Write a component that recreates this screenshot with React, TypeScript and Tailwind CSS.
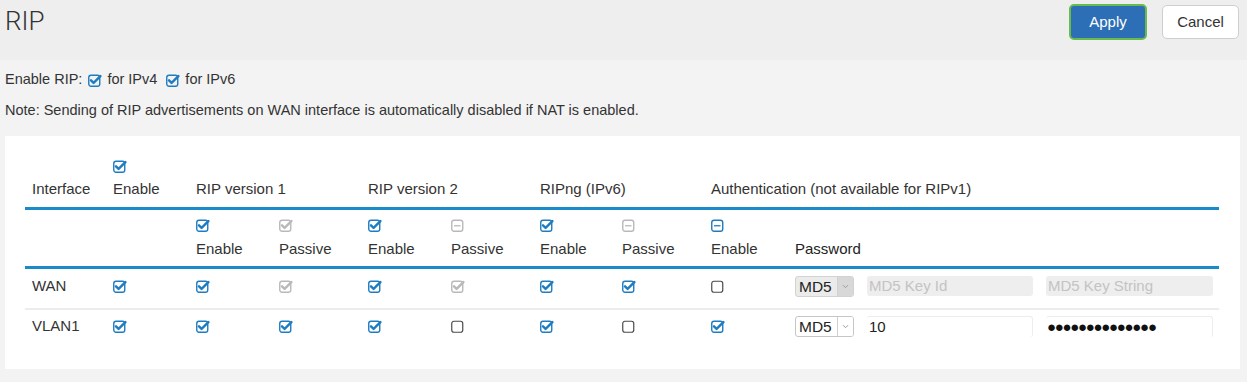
import React from "react";

type Mark = "on" | "onOff" | "off" | "minus" | "minusOff";

const cols =
  "grid grid-cols-[81px_83px_83px_89px_83px_89px_82px_89px_84px_72px_179px_1fr] pl-[7px]";

function Check({ mark }: { mark: Mark }) {
  const color =
    mark === "on" || mark === "minus" ? "#1f7cc0" : mark === "off" ? "#4a4a4a" : "#b9b9b9";

  return (
    <svg width="14" height="13" viewBox="0 0 14 13" className="block">
      <rect
        x="0.75"
        y="1.25"
        width="11"
        height="11"
        rx="2.2"
        fill="none"
        stroke={color}
        strokeWidth={mark === "off" ? 1.2 : 1.4}
      />
      {(mark === "on" || mark === "onOff") && (
        <path
          d="M3 6.3 L5.6 8.9 L12.4 2.1"
          fill="none"
          stroke={color}
          strokeWidth="2.4"
          strokeLinecap="round"
          strokeLinejoin="round"
        />
      )}
      {(mark === "minus" || mark === "minusOff") && (
        <path d="M3 6.75 H9.5" stroke={color} strokeWidth="1.3" />
      )}
    </svg>
  );
}

function Md5Select({ disabled }: { disabled?: boolean }) {
  return (
    <div
      className={`flex h-[21px] w-[59px] overflow-hidden rounded-[3px] border ${
        disabled ? "border-[#d2d2d2] bg-[#ebebeb]" : "border-[#c6c6c6] bg-white"
      }`}
    >
      <span className="flex-1 pl-[3px] text-[15.5px] leading-[19px] text-[#222]">MD5</span>
      <span
        className={`flex w-[16px] items-center justify-center border-l ${
          disabled ? "border-[#d2d2d2] bg-[#d8d8d8]" : "border-[#d0d0d0] bg-white"
        }`}
      >
        <svg width="7" height="5" viewBox="0 0 7 5">
          <path d="M1 1.2 L3.5 3.7 L6 1.2" fill="none" stroke="#9a9a9a" strokeWidth="1" />
        </svg>
      </span>
    </div>
  );
}

function Field({ width, text, placeholder }: { width: string; text?: string; placeholder?: string }) {
  if (placeholder) {
    return (
      <div className={`${width} h-[20px] rounded-[3px] bg-[#eeeeee] pl-[2px] leading-[20px] text-[#c3c3c3]`}>
        {placeholder}
      </div>
    );
  }
  return (
    <div
      className={`${width} h-[21px] rounded-[3px] border-t border-r border-[#ededed] bg-white pl-[2px] leading-[20px] text-[#222]`}
    >
      {text}
    </div>
  );
}

const rows: { name: string; marks: Mark[]; disabled: boolean }[] = [
  { name: "WAN", marks: ["on", "on", "onOff", "on", "onOff", "on", "on", "off"], disabled: true },
  { name: "VLAN1", marks: ["on", "on", "on", "on", "off", "on", "off", "on"], disabled: false },
];

export default function App() {
  return (
    <div className="h-[382px] w-[1247px] overflow-hidden bg-[#f3f3f3] font-['Liberation_Sans',Arial,sans-serif] text-[14.5px] text-[#333]">
      {/* Title bar */}
      <div className="flex h-[60px] items-start justify-between bg-[#eeeeee] pl-[5px] pr-[8px]">
        <h1 className="pt-[6px] font-['Roboto',sans-serif] text-[26px] font-light leading-[30px] text-[#333]">
          RIP
        </h1>
        <div className="flex items-center gap-[15px] pt-[4px]">
          <button className="h-[36px] w-[78px] rounded-[5px] border-2 border-[#68bb4c] bg-[#2d6fb6] text-[15px] text-white">
            Apply
          </button>
          <button className="h-[34px] w-[77px] rounded-[5px] border border-[#cfcfcf] bg-white text-[15px] text-[#333]">
            Cancel
          </button>
        </div>
      </div>

      <div className="px-[5px]">
        <div className="mt-[10px] flex h-[20px] items-center">
          <span>Enable RIP:</span>
          <span className="ml-[6px]">
            <Check mark="on" />
          </span>
          <span className="ml-[5px]">for IPv4</span>
          <span className="ml-[9px]">
            <Check mark="on" />
          </span>
          <span className="ml-[5px]">for IPv6</span>
        </div>
        <p className="mt-[10px] leading-[20px]">
          Note: Sending of RIP advertisements on WAN interface is automatically disabled if NAT is enabled.
        </p>

        {/* Table panel */}
        <div className="mt-[16px] h-[233px] w-[1235px] bg-white pl-[20px] pr-[21px]">
          <div className={`${cols} h-[74px] items-end border-b-[3px] border-[#1b8ac8] pb-[8px] text-[15px]`}>
            <div className="leading-5">Interface</div>
            <div className="flex flex-col items-start gap-[6px]">
              <Check mark="on" />
              <span className="leading-5">Enable</span>
            </div>
            <div className="col-span-2 leading-5">RIP version 1</div>
            <div className="col-span-2 leading-5">RIP version 2</div>
            <div className="col-span-2 leading-5">RIPng (IPv6)</div>
            <div className="col-span-4 leading-5">Authentication (not available for RIPv1)</div>
          </div>

          <div className={`${cols} h-[59px] items-end border-b-[3px] border-[#1b8ac8] pb-[7px] text-[15px]`}>
            <div />
            <div />
            {(
              [
                ["on", "Enable"],
                ["onOff", "Passive"],
                ["on", "Enable"],
                ["minusOff", "Passive"],
                ["on", "Enable"],
                ["minusOff", "Passive"],
                ["minus", "Enable"],
              ] as [Mark, string][]
            ).map(([mark, label], i) => (
              <div key={i} className="flex flex-col items-start gap-[7px]">
                <Check mark={mark} />
                <span className="leading-5">{label}</span>
              </div>
            ))}
            <div className="leading-5 text-[#222]">Password</div>
          </div>

          {rows.map((row, r) => (
            <div
              key={row.name}
              className={`${cols} items-center text-[15px] ${
                r === 0 ? "h-[41px] border-b-2 border-[#ececec] pb-[5px]" : "h-[32px]"
              }`}
            >
              <div>{row.name}</div>
              {row.marks.map((m, i) => (
                <div key={i}>
                  <Check mark={m} />
                </div>
              ))}
              <div>
                <Md5Select disabled={row.disabled} />
              </div>
              <div>
                {row.disabled ? <Field width="w-[166px]" placeholder="MD5 Key Id" /> : <Field width="w-[166px]" text="10" />}
              </div>
              <div>
                {row.disabled ? (
                  <Field width="w-[167px]" placeholder="MD5 Key String" />
                ) : (
                  <div className="h-[21px] w-[167px] rounded-[3px] border-t border-r border-[#ededed] bg-white pl-[1px] text-[15px] leading-[20px] tracking-[-1.3px] text-[#111]">
                    ●●●●●●●●●●●●●●
                  </div>
                )}
              </div>
            </div>
          ))}
        </div>
      </div>
    </div>
  );
}
